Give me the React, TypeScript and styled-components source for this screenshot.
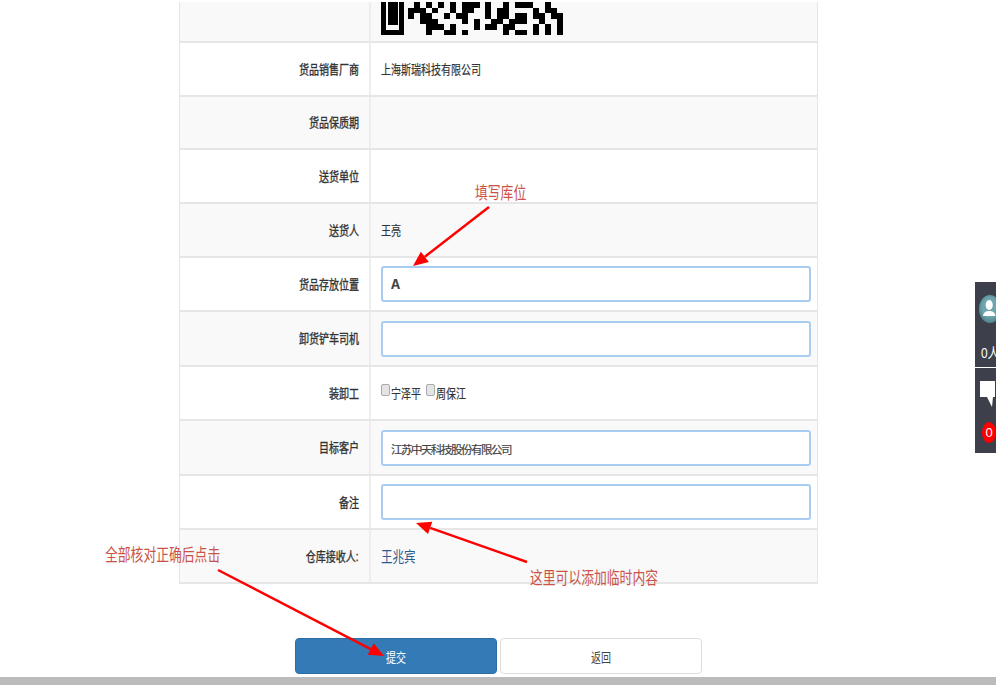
import React from 'react'
import styled, { createGlobalStyle } from 'styled-components'

// black modules of the visible part of the code, one list per row
const QR_ROWS = [
  [1, 3, 5, 7, 9, 10, 11, 13, 16, 18, 19, 20, 23],
  [0, 1, 2, 4, 7, 9, 10, 13, 15, 16, 21, 23, 24],
  [0, 2, 3, 6, 8, 9, 13, 15, 16, 18, 19, 21, 22, 24, 25],
  [2, 3, 4, 9, 11, 14, 15, 17, 18, 19, 22, 25],
  [3, 4, 5, 7, 11, 13, 14, 16, 17, 21, 23, 25],
  [3, 6, 7, 9, 16, 18, 19, 21, 23, 25],
]

const GlobalStyle = createGlobalStyle`
  html, body {
    margin: 0;
    padding: 0;
    background: #fff;
    font-family: "Liberation Sans", "Noto Sans CJK SC", sans-serif;
    color: #333;
  }
`

const Page = styled.div`
  position: relative;
  width: 998px;
  height: 687px;
  overflow: hidden;
  padding-top: 2px;
  box-sizing: border-box;
`

const Table = styled.div`
  width: 639px;
  margin-left: 179px;
  box-sizing: border-box;
  border-left: 1px solid #e6e6e6;
  border-right: 1px solid #e6e6e6;
`

const Row = styled.div<{ $h: number; $striped?: boolean }>`
  display: grid;
  grid-template-columns: 191px 1fr;
  height: ${({ $h }) => $h}px;
  box-sizing: border-box;
  border-bottom: 2px solid #e6e6e6;
  background: ${({ $striped }) => ($striped ? '#f9f9f9' : '#fff')};
`

const Label = styled.div`
  display: flex;
  align-items: center;
  justify-content: flex-end;
  padding-right: 10px;
  border-right: 2px solid #eeeeee;
  font-size: 13px;
  color: #333;
  -webkit-text-stroke: 0.35px #333;
`

const Squeeze = styled.span<{ $origin?: string }>`
  display: inline-block;
  margin-top: -2px;
  white-space: nowrap;
  transform: scaleX(0.77);
  transform-origin: ${({ $origin }) => $origin || 'right'} center;
`

const Value = styled.div`
  display: flex;
  align-items: center;
  padding: 0 6px 0 10px;
  font-size: 13px;
  color: #333;
  -webkit-text-stroke: 0.2px #333;
`

const QrBox = styled.svg`
  display: block;
  align-self: flex-end;
  margin-bottom: 7px;
`

const Field = styled.input<{ $latin?: boolean }>`
  width: 430px;
  height: 36px;
  box-sizing: border-box;
  padding: 2px 8px 0;
  border: 2px solid #a9cdf0;
  border-radius: 3px;
  background: #fff;
  outline: none;
  font-family: ${({ $latin }) => ($latin ? '"Liberation Mono", monospace' : '"Liberation Sans", "Noto Sans CJK SC", sans-serif')};
  font-size: ${({ $latin }) => ($latin ? '15px' : '11.5px')};
  font-weight: ${({ $latin }) => ($latin ? 700 : 400)};
  letter-spacing: ${({ $latin }) => ($latin ? '0' : '-1.5px')};
  color: #444;
  -webkit-text-stroke: ${({ $latin }) => ($latin ? '0' : '0.2px #444')};
`

const Checks = styled.div`
  display: flex;
  gap: 5px;
`

const CheckItem = styled.label`
  display: flex;
  align-items: center;
  width: 40px;
`

const CheckBox = styled.span`
  width: 9px;
  height: 12px;
  margin: -7px 1px 0 0;
  box-sizing: border-box;
  border: 1px solid #aaa;
  border-radius: 2px;
  background: #e4e4e4;
  flex: none;
`

const Receiver = styled.span`
  font-size: 15px;
  color: #2a5a8f;
  -webkit-text-stroke: 0;
`

const Actions = styled.div`
  display: flex;
  gap: 3px;
  margin: 54px 0 0 295px;
`

const Button = styled.button<{ $primary?: boolean }>`
  width: 202px;
  height: 36px;
  padding: 2px 0 0;
  box-sizing: border-box;
  border: 1px solid ${({ $primary }) => ($primary ? '#2e6da4' : '#ddd')};
  border-radius: 4px;
  background: ${({ $primary }) => ($primary ? '#337ab7' : '#fff')};
  color: ${({ $primary }) => ($primary ? '#fff' : '#444')};
  font-family: "Liberation Sans", "Noto Sans CJK SC", sans-serif;
  font-size: 13px;
`

const BottomBar = styled.div`
  height: 8px;
  margin-top: 3px;
  width: 996px;
  background: #bbbbbb;
`

const Overlay = styled.svg`
  position: absolute;
  left: 0;
  top: 0;
  pointer-events: none;
`

const Note = styled.div<{ $x: number; $y: number }>`
  position: absolute;
  left: ${({ $x }) => $x}px;
  top: ${({ $y }) => $y}px;
  font-size: 16px;
  line-height: 18px;
  color: #c9534a;
  white-space: nowrap;
  transform: scale(0.8, 1.05);
  transform-origin: left top;
`

const SideDock = styled.div`
  position: absolute;
  left: 975px;
  top: 282px;
  width: 21px;
  overflow: hidden;
  display: flex;
  flex-direction: column;
  gap: 1px;
`

const DockCard = styled.div`
  position: relative;
  width: 21px;
  height: 85px;
  overflow: hidden;
  background: #3d3f4a;
`

const DockLabel = styled.span`
  position: absolute;
  left: 6px;
  top: 60px;
  font-size: 14px;
  color: #fff;
  white-space: nowrap;
  transform: scaleX(0.85);
  transform-origin: left center;
`

const DockIcon = styled.svg`
  position: absolute;
  left: 4px;
  top: 13px;
`

const Badge = styled.span`
  position: absolute;
  left: 7px;
  top: 54px;
  width: 14px;
  height: 21px;
  border-radius: 50%;
  background: #f00;
  color: #fff;
  font-size: 13px;
  line-height: 21px;
  text-align: center;
`

const QrCode = () => (
  <QrBox width="182" height="33" viewBox="0 0 182 33" shapeRendering="crispEdges">
    <path d="M0 0h5v28h13V0h5v33H0zM7 0h10v23H7z" fill="#000" />
    {QR_ROWS.map((cols, y) =>
      cols.map((x) => (
        <rect key={`${x}-${y}`} x={27 + x * 5.96} y={y * 5.5} width="5.96" height="5.5" fill="#000" />
      ))
    )}
  </QrBox>
)

const Arrow = ({ x1, y1, x2, y2 }: { x1: number; y1: number; x2: number; y2: number }) => {
  const angle = Math.atan2(y2 - y1, x2 - x1)
  const len = 15
  const wide = 6.5
  const bx = x2 - Math.cos(angle) * len
  const by = y2 - Math.sin(angle) * len
  const nx = -Math.sin(angle) * wide
  const ny = Math.cos(angle) * wide
  return (
    <g fill="#f00" stroke="#f00">
      <line x1={x1} y1={y1} x2={bx} y2={by} strokeWidth="2.4" />
      <polygon
        points={`${x2},${y2} ${bx + nx},${by + ny} ${bx - nx},${by - ny}`}
        stroke="none"
      />
    </g>
  )
}

const FormRow = ({ label, h, striped, children }: FormRowProps) => (
  <Row $h={h} $striped={striped}>
    <Label>{label && <Squeeze>{label}</Squeeze>}</Label>
    <Value>{children}</Value>
  </Row>
)

const App = () => (
  <Page>
    <GlobalStyle />
    <Table>
      <FormRow h={41} striped>
        <QrCode />
      </FormRow>
      <FormRow h={54} label="货品销售厂商">
        <Squeeze $origin="left">上海斯瑞科技有限公司</Squeeze>
      </FormRow>
      <FormRow h={53} striped label="货品保质期" />
      <FormRow h={54} label="送货单位" />
      <FormRow h={54} striped label="送货人">
        <Squeeze $origin="left">王亮</Squeeze>
      </FormRow>
      <FormRow h={54} label="货品存放位置">
        <Field $latin defaultValue="A" />
      </FormRow>
      <FormRow h={55} striped label="卸货铲车司机">
        <Field />
      </FormRow>
      <FormRow h={54} label="装卸工">
        <Checks>
          <CheckItem>
            <CheckBox />
            <Squeeze $origin="left">宁泽平</Squeeze>
          </CheckItem>
          <CheckItem>
            <CheckBox />
            <Squeeze $origin="left">周保江</Squeeze>
          </CheckItem>
        </Checks>
      </FormRow>
      <FormRow h={55} striped label="目标客户">
        <Field defaultValue="江苏中天科技股份有限公司" />
      </FormRow>
      <FormRow h={54} label="备注">
        <Field />
      </FormRow>
      <FormRow h={54} striped label="仓库接收人:">
        <Receiver>
          <Squeeze $origin="left">王兆宾</Squeeze>
        </Receiver>
      </FormRow>
    </Table>
    <Actions>
      <Button $primary>
        <Squeeze $origin="center">提交</Squeeze>
      </Button>
      <Button>
        <Squeeze $origin="center">返回</Squeeze>
      </Button>
    </Actions>
    <BottomBar />

    <Note $x={475} $y={184}>填写库位</Note>
    <Note $x={530} $y={569}>这里可以添加临时内容</Note>
    <Note $x={105} $y={546}>全部核对正确后点击</Note>
    <Overlay width="998" height="687">
      <Arrow x1={489} y1={207} x2={413} y2={266} />
      <Arrow x1={527} y1={562} x2={416} y2={523} />
      <Arrow x1={218} y1={570} x2={384} y2={656} />
    </Overlay>

    <SideDock>
      <DockCard>
        <DockIcon width="22" height="28" viewBox="0 0 28 28" preserveAspectRatio="none">
          <defs>
            <radialGradient id="avatarFill" cx="50%" cy="45%" r="55%">
              <stop offset="60%" stopColor="#6fa5ae" />
              <stop offset="100%" stopColor="#4d8490" />
            </radialGradient>
          </defs>
          <circle cx="14" cy="14" r="14" fill="url(#avatarFill)" />
          <ellipse cx="13" cy="10" rx="4.5" ry="5" fill="#fff" />
          <path d="M5 21c1-4 4-5 8-5s7 1 8 5z" fill="#fff" />
        </DockIcon>
        <DockLabel>0人</DockLabel>
      </DockCard>
      <DockCard>
        <DockIcon width="16" height="26" viewBox="0 0 16 26">
          <path d="M1 0h15v16h-2l-1 10-5-10H1z" fill="#fff" />
        </DockIcon>
        <Badge>0</Badge>
      </DockCard>
    </SideDock>
  </Page>
)

type FormRowProps = {
  label?: string
  h: number
  striped?: boolean
  children?: React.ReactNode
}

export default App
